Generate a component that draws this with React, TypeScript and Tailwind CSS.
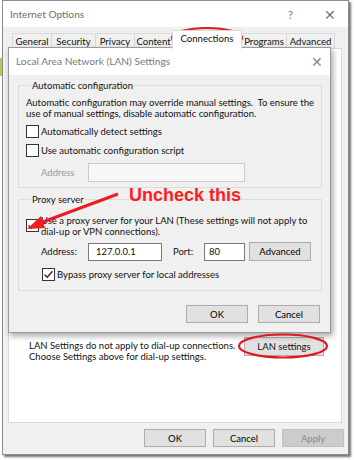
import React from "react";

const Check = ({ checked }: { checked?: boolean }) => (
  <div className="w-[13px] h-[13px] shrink-0 border border-[#333] bg-white flex items-center justify-center">
    {checked && (
      <svg width="11" height="11" viewBox="0 0 11 11">
        <path d="M1.5 5.5 L4.2 8.2 L9.5 2.2" fill="none" stroke="#222" strokeWidth="1.3" />
      </svg>
    )}
  </div>
);

const Btn = ({ children, className = "" }: { children: React.ReactNode; className?: string }) => (
  <div
    className={
      "h-[18px] w-[62px] flex items-center justify-center bg-[#e1e1e1] border border-[#adadad] text-black " +
      className
    }
  >
    {children}
  </div>
);

export default function App() {
  return (
    <div
      className="relative w-[354px] h-[460px] bg-white overflow-hidden whitespace-nowrap text-[9.5px] leading-[11px] text-[#111]"
      style={{ fontFamily: 'Lato, "Noto Sans", sans-serif' }}
    >
      <div className="absolute left-0 top-[58px] w-[2px] h-[18px] bg-[#b8c94a]" />

      {/* Internet Options window */}
      <div className="ml-[2px] w-[347px] h-[455px] bg-[#f0f0f0] border border-[#8c8c8c] shadow-[2px_2px_2px_rgba(0,0,0,0.55)] flex flex-col">
        <div className="h-[26px] shrink-0 bg-white flex items-center pl-[7px] pr-[12px] text-[10.2px] text-[#6d6d6d]">
          <span className="flex-1">Internet Options</span>
          <span className="mr-[31px] text-[11px] text-[#777]">?</span>
          <span className="text-[14px] font-light text-[#777]">✕</span>
        </div>

        <div className="h-[21px] shrink-0 flex items-end pl-[9px] text-[9.6px]">
          {[
            ["General", 39],
            ["Security", 44],
            ["Privacy", 39],
            ["Content", 38],
          ].map(([t, w]) => (
            <div
              key={t as string}
              style={{ width: w as number }}
              className="h-[15px] border border-b-0 border-r-0 border-[#d9d9d9] bg-[#f0f0f0] flex items-center justify-center"
            >
              {t}
            </div>
          ))}
          <div className="w-[70px] h-[19px] mb-[-1px] relative z-10 border border-b-0 border-[#d9d9d9] bg-white flex items-start pt-[2px] justify-center">
            Connections
          </div>
          {[
            ["Programs", 45],
            ["Advanced", 48],
          ].map(([t, w]) => (
            <div
              key={t as string}
              style={{ width: w as number }}
              className="h-[15px] border border-b-0 border-l-0 border-[#d9d9d9] bg-[#f0f0f0] flex items-center justify-center"
            >
              {t}
            </div>
          ))}
        </div>

        <div className="ml-[5px] w-[334px] h-[375px] shrink-0 bg-white border border-[#d9d9d9] pt-[288px] pl-[20px] pr-[17px] flex items-start">
          <div className="flex-1 pt-[3px]">
            <div>LAN Settings do not apply to dial-up connections.</div>
            <div>Choose Settings above for dial-up settings.</div>
          </div>
          <div className="w-[80px] h-[19px] bg-[#e1e1e1] border border-[#adadad] flex items-center justify-center">
            LAN settings
          </div>
        </div>

        <div className="flex justify-end gap-[7px] pt-[6px] pr-[4px]">
          <Btn>OK</Btn>
          <Btn>Cancel</Btn>
          <Btn className="!bg-[#cccccc] !border-[#bfbfbf] !text-[#8a8a8a]">Apply</Btn>
        </div>
      </div>

      {/* LAN settings dialog */}
      <div className="absolute left-[8px] top-[47px] w-[323px] h-[286px] bg-[#f0f0f0] border border-[#9a9a9a] shadow-[2px_3px_6px_rgba(0,0,0,0.35)] flex flex-col">
        <div className="h-[27px] shrink-0 bg-white flex items-center pl-[7px] pr-[7px] text-[10.2px] text-[#7a7a7a]">
          <span className="flex-1">Local Area Network (LAN) Settings</span>
          <span className="text-[14px] font-light text-[#888]">✕</span>
        </div>

        <div className="flex-1 pl-[9px] pr-[8px] pt-[5px] flex flex-col">
          <fieldset className="border border-[#dcdcdc] pl-[7px] pr-[6px] pb-[5px]">
            <legend className="ml-[5px] px-[1px]">Automatic configuration</legend>
            <div className="mt-[6px]">
              Automatic configuration may override manual settings.&nbsp; To ensure the
              <br />
              use of manual settings, disable automatic configuration.
            </div>
            <div className="mt-[6px] flex items-center gap-[2px] h-[13px]">
              <Check />
              <span>Automatically detect settings</span>
            </div>
            <div className="mt-[6px] flex items-center gap-[2px] h-[13px]">
              <Check />
              <span>Use automatic configuration script</span>
            </div>
            <div className="mt-[6px] flex items-center pl-[15px]">
              <span className="w-[47px] text-[#9a9a9a]">Address</span>
              <div className="w-[157px] h-[19px] bg-[#f7f7f7] border border-[#cccccc]" />
            </div>
          </fieldset>

          <fieldset className="mt-[6px] border border-[#dcdcdc] pl-[7px] pr-[6px] pb-[9px]">
            <legend className="ml-[5px] px-[1px]">Proxy server</legend>
            <div className="mt-[10px] flex items-start gap-[2px]">
              <div className="mt-[4px]">
                <Check checked />
              </div>
              <span>
                Use a proxy server for your LAN (These settings will not apply to
                <br />
                dial-up or VPN connections).
              </span>
            </div>
            <div className="mt-[5px] flex items-center pl-[15px]">
              <span className="w-[47px]">Address:</span>
              <div className="w-[74px] h-[18px] bg-white border border-[#7a7a7a] flex items-center pl-[7px]">
                127.0.0.1
              </div>
              <span className="ml-[11px] w-[31px]">Port:</span>
              <div className="w-[41px] h-[18px] bg-white border border-[#7a7a7a] flex items-center pl-[4px]">
                80
              </div>
              <Btn className="ml-[4px] h-[19px]">Advanced</Btn>
            </div>
            <div className="mt-[7px] flex items-center gap-[2px] pl-[16px] h-[13px]">
              <Check checked />
              <span>Bypass proxy server for local addresses</span>
            </div>
          </fieldset>

          <div className="mt-[14px] flex justify-end gap-[10px] pr-[2px]">
            <Btn className="w-[61px]">OK</Btn>
            <Btn className="w-[61px]">Cancel</Btn>
          </div>
        </div>
      </div>

      {/* annotations */}
      <svg className="absolute inset-0 pointer-events-none" width="354" height="460">
        <ellipse cx="207" cy="38" rx="35" ry="10" fill="none" stroke="#e0181f" strokeWidth="2.2" />
        <ellipse cx="283" cy="346" rx="44" ry="11.5" fill="none" stroke="#e0181f" strokeWidth="2.2" />
        <line x1="118" y1="194" x2="40" y2="223" stroke="#ee1c24" strokeWidth="3" />
        <polygon points="27,229 41,216 45,228" fill="#ee1c24" />
      </svg>
      <div
        className="absolute left-[129px] top-[185px] text-[18px] leading-[20px] font-bold text-[#ff1c1c]"
        style={{ fontFamily: '"Liberation Sans", Arial, sans-serif' }}
      >
        Uncheck this
      </div>
    </div>
  );
}
